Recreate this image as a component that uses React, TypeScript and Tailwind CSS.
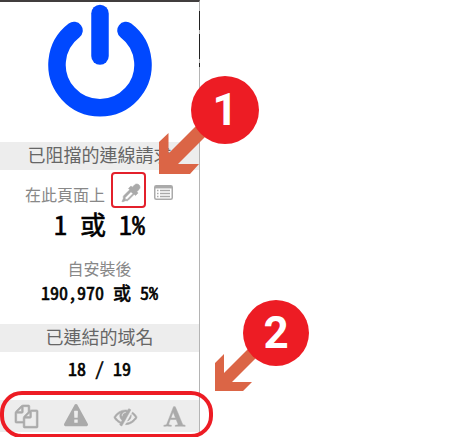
import type { ReactNode } from "react";

const cjk = "font-['Noto_Sans_CJK_TC',sans-serif]";
const mono =
  "font-['Noto_Sans_Mono_CJK_TC','Noto_Sans_CJK_TC',monospace] [font-feature-settings:'hwid'] [-webkit-text-stroke:0.6px_black]";

const paths = {
  dropper:
    "M1698 94q94 94 94 226.500t-94 225.500l-225 223 104 104q10 10 10 23t-10 23l-210 210q-10 10-23 10t-23-10l-105-105-603 603q-37 37-90 37h-203l-256 128-64-64 128-256v-203q0-53 37-90l603-603-105-105q-10-10-10-23t10-23l210-210q10-10 23-10t23 10l104 104 223-225q93-94 225.500-94t226.500 94zm-1186 1442l576-576-192-192-576 576v192h192z",
  files:
    "M1696 384q40 0 68 28t28 68v1216q0 40-28 68t-68 28h-960q-40 0-68-28t-28-68v-288h-544q-40 0-68-28t-28-68v-672q0-40 20-88t48-76l408-408q28-28 76-48t88-20h416q40 0 68 28t28 68v328q68-40 128-40h416zm-544 213l-299 299h299v-299zm-640-384l-299 299h299v-299zm196 647l316-316v-416h-384v416q0 40-28 68t-68 28h-416v640h512v-256q0-40 20-88t48-76zm956 804v-1152h-384v416q0 40-28 68t-68 28h-416v640h896z",
  warning:
    "M1024 1375v-190q0-14-9.500-23.500t-22.500-9.500h-192q-13 0-22.500 9.500t-9.500 23.500v190q0 14 9.500 23.500t22.500 9.500h192q13 0 22.500-9.500t9.500-23.500zm-2-374l18-459q0-12-10-19-13-11-24-11h-220q-11 0-24 11-10 7-10 21l17 457q0 10 10 16.500t24 6.500h185q14 0 23.500-6.500t10.500-16.500zm-14-934l768 1408q35 63-2 126-17 29-46.500 46t-63.500 17h-1536q-34 0-63.500-17t-46.500-46q-37-63-2-126l768-1408q17-31 47-49t65-18 65 18 47 49z",
  eye:
    "M555 1335l78-141q-87-63-136-159t-49-203q0-121 61-225-229 117-381 353 167 258 427 375zm389-759q0-20-14-34t-34-14q-125 0-214.500 89.500t-89.500 214.500q0 20 14 34t34 14 34-14 14-34q0-86 61-147t147-61q20 0 34-14t14-34zm363-191q0 7-1 9-106 189-316 567t-315 566l-49 89q-10 16-28 16-12 0-134-70-16-10-16-28 0-12 44-87-143-65-263.500-173t-208.500-245q-20-31-20-69t20-69q153-235 380-371t496-136q89 0 180 17l54-97q10-16 28-16 5 0 18 6t31 15.500 33 18.500 31.500 18.500 19.500 11.500q16 10 16 27zm37 447q0 139-79 253.500t-209 164.500l280-502q8 45 8 84zm448 128q0 35-20 69-39 64-109 145-150 172-347.500 267t-419.500 95l74-132q212-18 392.500-137t301.500-307q-115-179-282-294l63-112q95 64 182.500 153t144.500 184q20 34 20 69z",
  font:
    "M789 559l-170 450q33 0 136.500 2t160.500 2q19 0 57-2-87-253-184-452zm-725 1105l2-79q23-7 56-12.500t57-10.500 49.500-14.500 44.500-29 31-50.500l237-616 280-724h128q8 14 11 21l205 480q33 78 106 257.500t114 274.500q15 34 58 144.500t72 168.500q20 45 35 57 19 15 88 29.500t84 20.500q6 38 6 57 0 4-.5 13t-.5 13q-63 0-190-8t-191-8q-76 0-215 7t-178 8q0-43 4-78l131-28q1 0 12.500-2.500t15.500-3.500 14.500-4.500 15-6.500 11-8 9-11 2.500-14q0-16-31-96.500t-72-177.500-42-100l-450-2q-26 58-76.500 195.500t-50.500 162.500q0 22 14 37.500t43.500 24.500 48.500 13.500 57 8.500 41 4q1 19 1 58 0 9-2 27-58 0-174.500-10t-174.500-10q-8 0-26.500 4t-21.500 4q-80 14-188 14z",
};

function Icon({ d, className, weight = 0 }: { d: string; className: string; weight?: number }) {
  return (
    <svg
      viewBox="0 0 1792 1792"
      fill="currentColor"
      stroke="currentColor"
      strokeWidth={weight}
      className={`${className} overflow-visible`}
      aria-hidden="true"
    >
      <path d={d} />
    </svg>
  );
}

function Heading({ children }: { children: ReactNode }) {
  return (
    <h2 className={`${cjk} h-7 bg-[#ededed] text-center text-lg leading-6 text-[#666]`}>
      {children}
    </h2>
  );
}

function Callout({ n, className }: { n: number; className: string }) {
  return (
    <span
      className={`${className} absolute flex items-center justify-center rounded-full bg-[#ed1c24] font-[Roboto,Arial,sans-serif] text-[44px] leading-none font-bold text-white`}
    >
      {n}
    </span>
  );
}

export default function App() {
  return (
    <main className="relative min-h-screen overflow-hidden bg-white">
      <section className="w-50 border-t-2 border-r border-t-[#413e3e] border-r-[#b4b4b4]">
        <div className="flex h-35 justify-center pt-0.5">
          <button type="button" aria-label="電源" className="h-fit">
            <svg viewBox="0 0 106 114" className="w-[106px]" fill="none" stroke="#0048ff" strokeWidth="17.500" strokeLinecap="round">
              <path d="M53 9.500v42.500" />
              <path d="M27 26.500a43 43 0 1 0 52 0" />
            </svg>
          </button>
        </div>
        <Heading>已阻擋的連線請求</Heading>
        <div className="flex items-center gap-1.5 pt-0.5 pl-[25px]">
          <span className={`${cjk} pt-2 text-base text-[#888]`}>在此頁面上</span>
          <button
            type="button"
            aria-label="元素選擇器"
            className="flex h-9 w-[35px] items-center justify-center rounded border-2 border-[#e3202b] pt-1.5 pl-1 text-[#aaa]"
          >
            <Icon d={paths.dropper} className="size-[18px]" weight={60} />
          </button>
          <button type="button" aria-label="記錄器" className="ml-0.5 pt-1 text-[#aaa]">
            <svg viewBox="0 0 19 15" className="w-[19px]" fill="none" stroke="currentColor" aria-hidden="true">
              <rect x=".75" y=".75" width="17.500" height="13.500" rx="1.500" strokeWidth="1.500" />
              <path d="M1 2.200h17" strokeWidth="2.500" />
              <path d="M3 5.500h1.500M6 5.500h10M3 8.500h1.500M6 8.500h10M3 11.500h1.500M6 11.500h10" strokeWidth="1.500" />
            </svg>
          </button>
        </div>
        <p className={`${mono} text-center text-[26px] leading-8 text-black`}>1 或 1%</p>
        <p className={`${cjk} mt-4 text-center text-base leading-6 text-[#888]`}>自安裝後</p>
        <p className={`${mono} mb-5 text-center text-lg leading-6 text-black`}>190,970 或 5%</p>
        <Heading>已連結的域名</Heading>
        <p className={`${mono} pb-2 text-center text-lg leading-8 text-black`}>18 / 19</p>
        <div className="mt-2 grid h-8 grid-cols-4 bg-[#ededed] pl-0.5 text-[#aaa]">
          <button type="button" aria-label="彈出視窗" className="flex items-center justify-center">
            <Icon d={paths.files} className="size-[23px]" weight={50} />
          </button>
          <button type="button" aria-label="大型媒體" className="flex items-center justify-center">
            <Icon d={paths.warning} className="size-6" />
          </button>
          <button type="button" aria-label="美化過濾" className="flex items-center justify-center">
            <Icon d={paths.eye} className="size-[23px]" weight={40} />
          </button>
          <button type="button" aria-label="遠端字型" className="flex items-center justify-center">
            <Icon d={paths.font} className="size-[23px]" weight={40} />
          </button>
        </div>
      </section>

      <svg width="2" height="70" className="absolute top-0 left-[199px]" stroke="#222" aria-hidden="true">
        <path d="M.5 11v19M.5 34v25M.5 63v4" />
      </svg>
      <svg width="320" height="437" className="pointer-events-none absolute top-0 left-0" fill="#db6546" aria-hidden="true">
        <path d="M159 142l9.500-9v20.500l31.500-31.500 10 10-32 32h21l-9 10h-31z" />
        <path d="M215 363l9-9v19l28-28 10 7-30 30h20l-9 9h-28z" />
      </svg>
      <Callout n={1} className="top-[76px] left-[191px] size-[68px]" />
      <Callout n={2} className="top-[300px] left-[243px] size-[66px]" />
      <div className="pointer-events-none absolute top-[391px] left-0 h-[47px] w-[213px] rounded-[22px] border-4 border-[#ed1c24]" />
    </main>
  );
}
